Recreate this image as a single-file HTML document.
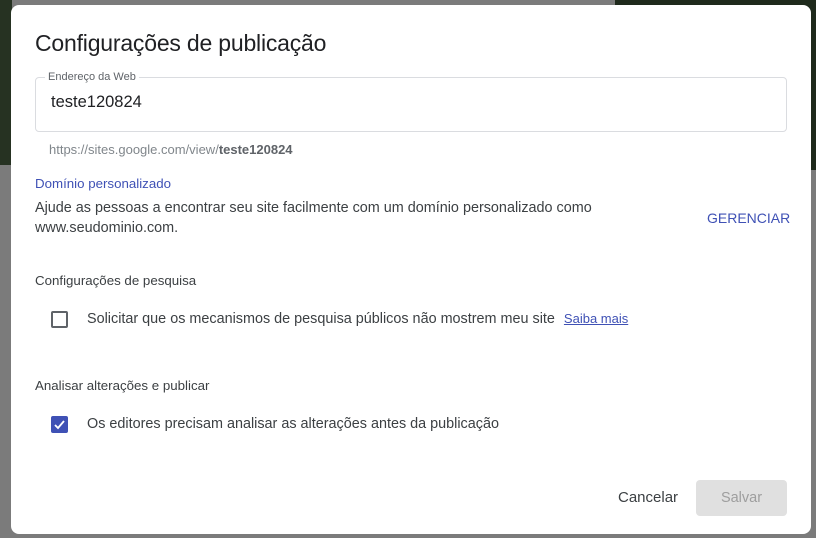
<!DOCTYPE html>
<html><head><meta charset="utf-8"><style>
*{margin:0;padding:0;box-sizing:border-box}
body{width:816px;height:538px;background:#7b7b7b;position:relative;overflow:hidden;font-family:"Liberation Sans",sans-serif;color:#3c4043}
.bg1{position:absolute;left:615px;top:0;width:201px;height:170px;background:#1f2a1c}
.bg2{position:absolute;left:0;top:0;width:12px;height:165px;background:#263222}
.dlg{position:absolute;left:11px;top:5px;width:800px;height:529px;background:#fff;border-radius:8px}
.t{position:absolute;left:24px;top:25px;font-size:23px;color:#202124;letter-spacing:-0.2px}
.fld{position:absolute;left:24px;top:72px;width:752px;height:55px;border:1px solid #dadce0;border-radius:4px}
.lbl{position:absolute;left:34px;top:66px;background:#fff;padding:0 3px;font-size:11px;color:#5f6368}
.val{position:absolute;left:40px;top:88px;font-size:16.5px;color:#202124}
.url{position:absolute;left:38px;top:137px;font-size:13px;color:#80868b}
.url b{color:#5f6368}
.sh{position:absolute;left:24px;font-size:13.3px;color:#3c4043;font-weight:bold;-webkit-text-stroke:0;font-weight:600}
.p{position:absolute;font-size:14.4px;color:#3c4043;line-height:20px}
.cb{position:absolute;left:40px;width:17px;height:17px;border-radius:2px}
</style></head><body>
<div class="bg1"></div><div class="bg2"></div>
<div class="dlg">
<div class="t">Configurações de publicação</div>
<div class="fld"></div>
<div class="lbl">Endereço da Web</div>
<div class="val">teste120824</div>
<div class="url">https://sites.google.com/view/<b>teste120824</b></div>
<div class="sh" style="top:171px;color:#3f51b5;font-weight:normal">Domínio personalizado</div>
<div class="p" style="left:24px;top:193px;width:640px">Ajude as pessoas a encontrar seu site facilmente com um domínio personalizado como www.seudominio.com.</div>
<div class="p" style="left:696px;top:203px;color:#3f51b5;font-size:14px">GERENCIAR</div>
<div class="sh" style="top:268px;font-weight:normal">Configurações de pesquisa</div>
<div class="cb" style="top:306px;border:2px solid #5f6368"></div>
<div class="p" style="left:76px;top:304px">Solicitar que os mecanismos de pesquisa públicos não mostrem meu site <span style="color:#3f51b5;text-decoration:underline;font-size:13px;margin-left:5px">Saiba mais</span></div>
<div class="sh" style="top:373px;font-weight:normal">Analisar alterações e publicar</div>
<div class="cb" style="top:411px;background:#3f51b5"><svg width="17" height="17" viewBox="0 0 17 17"><path d="M4 9l3 3 6-7" fill="none" stroke="#fff" stroke-width="1.8"/></svg></div>
<div class="p" style="left:76px;top:409px">Os editores precisam analisar as alterações antes da publicação</div>
<div class="p" style="left:607px;top:483px;color:#3c4043;font-size:15px">Cancelar</div>
<div style="position:absolute;left:685px;top:475px;width:91px;height:36px;background:#e0e0e0;border-radius:4px;color:#9e9e9e;font-size:14.5px;text-align:center;line-height:36px">Salvar</div>
</div>
</body></html>
